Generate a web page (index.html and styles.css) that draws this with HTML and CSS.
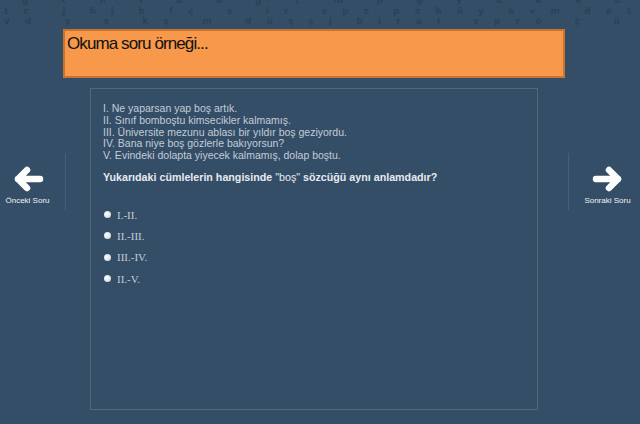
FILE: index.html
```html
<!DOCTYPE html>
<html lang="tr">
<head>
    <meta charset="UTF-8">
    <meta name="viewport" content="width=device-width, initial-scale=1.0">
    <title>Okuma soru örneği</title>
    <link rel="stylesheet" href="styles.css">
</head>
<body>
    <div class="letters">
        <div class="row row1">g   t   n   i   u   a   ğ   ç   m   p   g   y   d   u   a   o   i   r   ç   g   t   n   i   u   a   ğ   ç</div>
        <div class="row row2">t c   j  b j  b  f ç   s   i r   s p z  p z h ö y  o v m  d e t c j   j  b j  b  f ç   s   i r   s p z  p z h ö y  o v</div>
        <div class="row row3">v d   ş   s   k ş   m   d ü ş ç j  b i r a l   s p r ö   ç   ü   l  u d   ş   ş   k ş   m   d ü ş ç j  b i r a l   s p r ö</div>
    </div>

    <div class="layout">
        <div class="side">
            <div class="nav nav-prev">
                <svg class="arrow" width="32" height="28" viewBox="0 0 32 28">
                    <path d="M28 14 H6 M15 5 L6 14 L15 23" fill="none" stroke="#fff" stroke-width="6.5" stroke-linecap="round" stroke-linejoin="round"/>
                </svg>
                <span class="nav-label">Önceki Soru</span>
            </div>
        </div>

        <div class="center">
            <div class="title-box">Okuma soru örneği...</div>
            <div class="panel">
                <div class="sentences">
                    <p>I. Ne yaparsan yap boş artık.</p>
                    <p>II. Sınıf bomboştu kimsecikler kalmamış.</p>
                    <p>III. Üniversite mezunu ablası bir yıldır boş geziyordu.</p>
                    <p>IV. Bana niye boş gözlerle bakıyorsun?</p>
                    <p>V. Evindeki dolapta yiyecek kalmamış, dolap boştu.</p>
                </div>
                <p class="question">Yukarıdaki cümlelerin hangisinde <span class="plain">"boş"</span> sözcüğü aynı anlamdadır?</p>
                <ul class="options">
                    <li><span class="radio"></span>I.-II.</li>
                    <li><span class="radio"></span>II.-III.</li>
                    <li><span class="radio"></span>III.-IV.</li>
                    <li><span class="radio"></span>II.-V.</li>
                </ul>
            </div>
        </div>

        <div class="side">
            <div class="nav nav-next">
                <svg class="arrow" width="32" height="28" viewBox="0 0 32 28">
                    <path d="M4 14 H26 M17 5 L26 14 L17 23" fill="none" stroke="#fff" stroke-width="6.5" stroke-linecap="round" stroke-linejoin="round"/>
                </svg>
                <span class="nav-label">Sonraki Soru</span>
            </div>
        </div>
    </div>
</body>
</html>
```

FILE: styles.css
```css
body {
    margin: 0;
    background-color: #344e68;
    font-family: "Liberation Sans", Arial, sans-serif;
    overflow: hidden;
}
.letters {
    height: 29px;
    overflow: hidden;
    display: flex;
    flex-direction: column;
    font-family: "DejaVu Sans", sans-serif;
    font-weight: bold;
    font-size: 9px;
    color: #2b4259;
}
.row {
    flex: none;
    height: 9px;
    line-height: 9px;
    white-space: pre;
    overflow: hidden;
    letter-spacing: 6px;
}
.row1 {
    margin-top: -4px;
    padding-left: 22px;
}
.row2 {
    margin-top: 2px;
    padding-left: 4px;
}
.row3 {
    margin-top: 1px;
    padding-left: 4px;
}
.layout {
    display: grid;
    grid-template-columns: 66px 502px 72px;
}
.side {
    padding-top: 124px;
}
.nav {
    height: 57px;
    display: flex;
    flex-direction: column;
    align-items: center;
    color: #f0f3f6;
}
.nav-prev {
    border-right: 1px solid #465f78;
}
.nav-next {
    border-left: 1px solid #465f78;
}
.arrow {
    margin-top: 12px;
}
.nav-prev .arrow {
    margin-left: -10px;
}
.nav-next .arrow {
    margin-left: 6px;
}
.nav-label {
    margin-top: 3px;
    font-size: 8px;
}
.nav-prev .nav-label {
    margin-left: -10px;
}
.nav-next .nav-label {
    margin-left: 6px;
}
.center {
    display: flex;
    flex-direction: column;
}
.title-box {
    margin-left: -3px;
    width: 496px;
    height: 45px;
    background-color: #f7984a;
    border: 2px solid #c8742f;
    color: #111;
    font-size: 17px;
    letter-spacing: -0.9px;
    padding-left: 2px;
    line-height: 26px;
}
.panel {
    margin-top: 10px;
    margin-left: 24px;
    width: 448px;
    height: 322px;
    border: 1px solid #5a6678;
    padding: 14px 0 0 12px;
    box-sizing: border-box;
    color: #c3ccd6;
    font-size: 10.5px;
}
.sentences p {
    margin: 0;
    line-height: 11.8px;
}
.question {
    margin: 9px 0 0;
    font-weight: bold;
    font-size: 10.7px;
    color: #e6eaef;
}
.plain {
    font-weight: normal;
}
.options {
    list-style: none;
    margin: 21px 0 0;
    padding: 0;
}
.options li {
    display: flex;
    align-items: center;
    height: 21.3px;
    font-family: "Liberation Serif", serif;
    font-size: 11px;
    color: #c3ccd6;
}
.radio {
    width: 7px;
    height: 7px;
    border-radius: 50%;
    background: radial-gradient(circle at 40% 40%, #ffffff, #c9ced4);
    margin: 0 6px 0 1px;
}
```
